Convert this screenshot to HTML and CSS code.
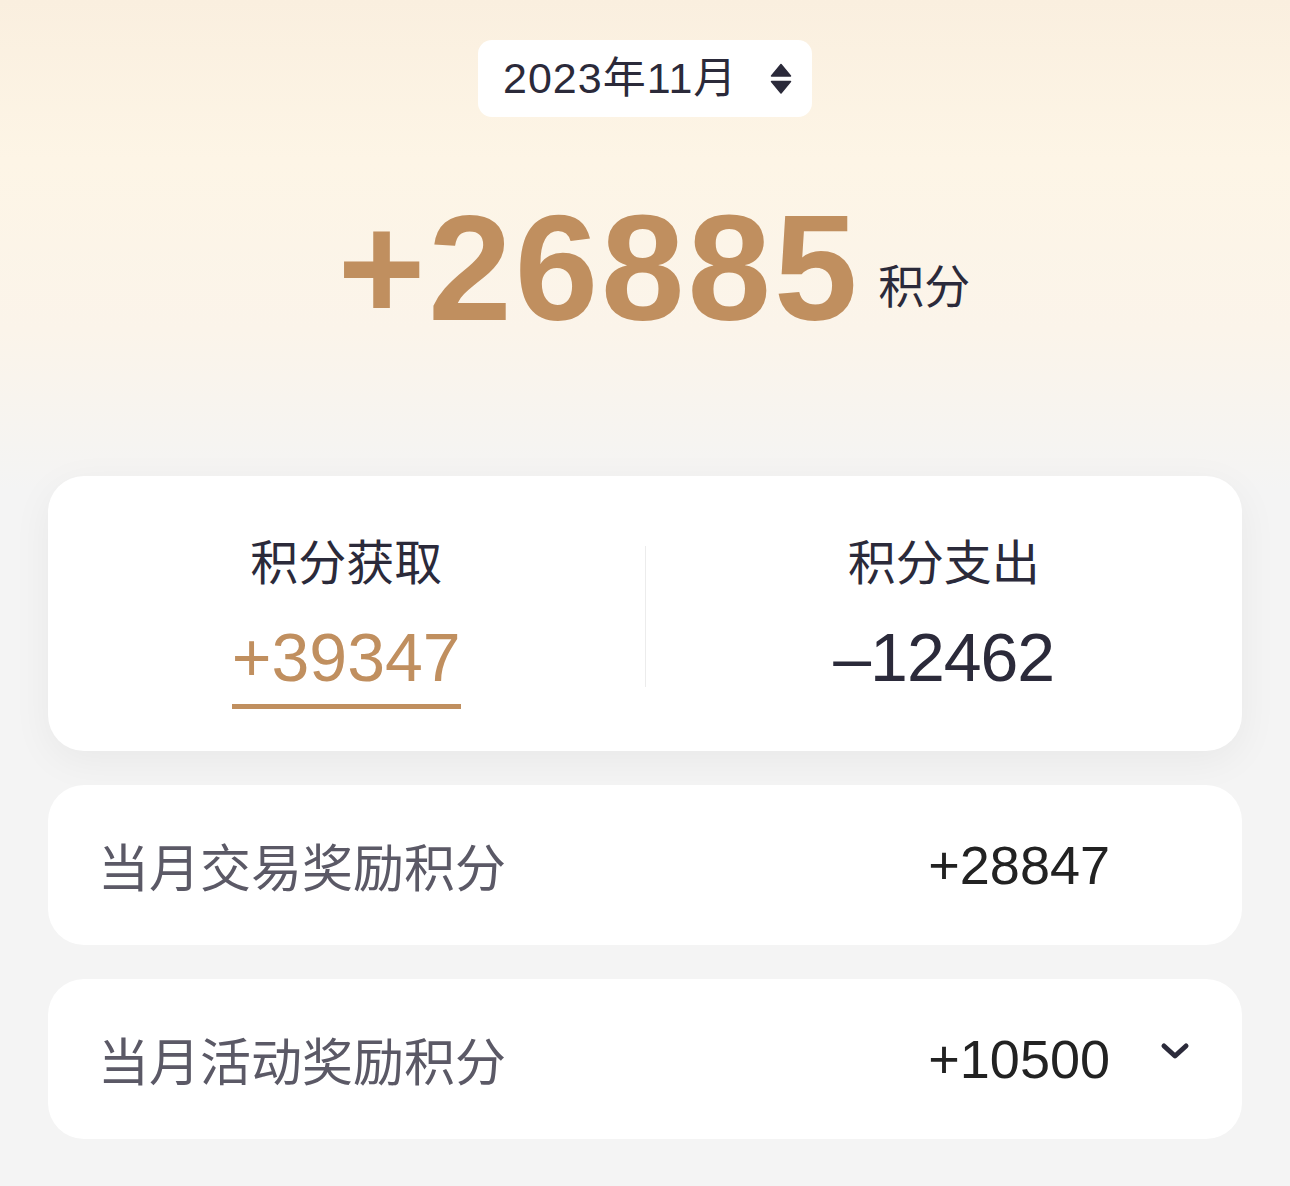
FILE: index.html
```html
<!DOCTYPE html>
<html lang="zh-CN">
<head>
	<meta charset="UTF-8">
	<title>积分明细</title>
	<link rel="stylesheet" href="styles.css">
</head>
<body>
	<div class="page">
		<!-- 月份选择 -->
		<div class="month_pick">
			<span class="month_text">2023年11月</span>
			<svg class="month_arrow" width="22" height="32" viewBox="0 0 22 32">
				<path d="M11 1.5 L20.5 13 L1.5 13 Z" fill="#2b2a3a" stroke="#2b2a3a" stroke-width="1.5" stroke-linejoin="round"/>
				<path d="M1.5 18.5 L20.5 18.5 L11 30 Z" fill="#2b2a3a" stroke="#2b2a3a" stroke-width="1.5" stroke-linejoin="round"/>
			</svg>
		</div>

		<!-- 当月合计 -->
		<div class="total">
			<span class="total_num">+26885</span>
			<span class="total_unit">积分</span>
		</div>

		<!-- 获取 / 支出 -->
		<div class="sum_card">
			<div class="sum_col">
				<div class="sum_title">积分获取</div>
				<div class="sum_num sum_active">+39347</div>
			</div>
			<div class="sum_line"></div>
			<div class="sum_col">
				<div class="sum_title">积分支出</div>
				<div class="sum_num sum_out">–12462</div>
			</div>
		</div>

		<!-- 明细 -->
		<div class="item">
			<div class="item_name">当月交易奖励积分</div>
			<div class="item_val">+28847</div>
			<svg class="item_arrow item_arrow_hide" width="30" height="18" viewBox="0 0 30 18">
				<path d="M4 4 L15 14 L26 4" fill="none" stroke="#2b2a3a" stroke-width="5" stroke-linecap="round" stroke-linejoin="round"/>
			</svg>
		</div>
		<div class="item">
			<div class="item_name">当月活动奖励积分</div>
			<div class="item_val">+10500</div>
			<svg class="item_arrow" width="30" height="18" viewBox="0 0 30 18">
				<path d="M4 4 L15 14 L26 4" fill="none" stroke="#2b2a3a" stroke-width="5" stroke-linecap="round" stroke-linejoin="round"/>
			</svg>
		</div>
	</div>
</body>
</html>
```

FILE: styles.css
```css
*{
	padding:0;
	margin:0;
	box-sizing:border-box;
}
html,body{
	min-height:100%;
}
body{
	min-height:1186px;
	font-family:"Liberation Sans","Noto Sans CJK SC",sans-serif;
	color:#2b2a3a;
	background:linear-gradient(180deg,#faefdf 0,#fdf5e6 160px,#fbf4ea 330px,#f4f4f4 490px,#f4f4f4 100%);
}
.page{
	padding:40px 48px 40px;
}
/**月份选择**/
.month_pick{
	width:334px;
	height:77px;
	margin:0 auto;
	padding:0 20px 0 25px;
	background:#fff;
	border-radius:14px;
	display:flex;
	align-items:center;
	justify-content:space-between;
}
.month_text{
	font-size:43px;
	line-height:1;
	letter-spacing:1px;
	color:#2b2a3a;
}
.month_arrow{
	display:block;
}
/**合计**/
.total{
	margin-top:76px;
	display:flex;
	justify-content:center;
	align-items:baseline;
	padding-left:18px;
}
.total_num{
	font-size:150px;
	font-weight:bold;
	line-height:1;
	letter-spacing:3px;
	color:#c08f5f;
}
.total_unit{
	margin-left:18px;
	font-size:46px;
	line-height:1;
	color:#2b2a3a;
	font-family:"Noto Sans CJK SC",sans-serif;
	position:relative;
	top:-17px;
}
/**获取/支出卡片**/
.sum_card{
	margin-top:133px;
	height:275px;
	background:#fff;
	border-radius:36px;
	box-shadow:0 10px 40px rgba(0,0,0,0.05);
	display:flex;
	align-items:center;
}
.sum_col{
	flex:1;
	display:flex;
	flex-direction:column;
	align-items:center;
	padding-top:17px;
}
.sum_title{
	font-family:"Noto Sans CJK SC",sans-serif;
	font-size:48px;
	line-height:1;
	color:#2b2a3a;
}
.sum_num{
	margin-top:40px;
	font-size:68px;
	line-height:1;
	padding-bottom:13px;
	border-bottom:5px solid transparent;
	color:#2b2a3a;
}
.sum_out{
	letter-spacing:-1px;
}
.sum_active{
	color:#c08f5f;
	border-bottom-color:#c08f5f;
}
.sum_line{
	width:1px;
	height:141px;
	background:#ececec;
	margin-top:6px;
}
/**明细行**/
.item{
	margin-top:34px;
	height:160px;
	background:#fff;
	border-radius:36px;
	display:flex;
	align-items:center;
	padding:0 52px 0 50px;
}
.item_name{
	flex:1;
	font-family:"Noto Sans CJK SC",sans-serif;
	font-size:51px;
	line-height:1;
	color:#5b5966;
}
.item_val{
	font-size:54px;
	line-height:1;
	color:#222;
}
.item_arrow{
	display:block;
	margin-left:50px;
	margin-bottom:16px;
}
.item_arrow_hide{
	visibility:hidden;
}
```
